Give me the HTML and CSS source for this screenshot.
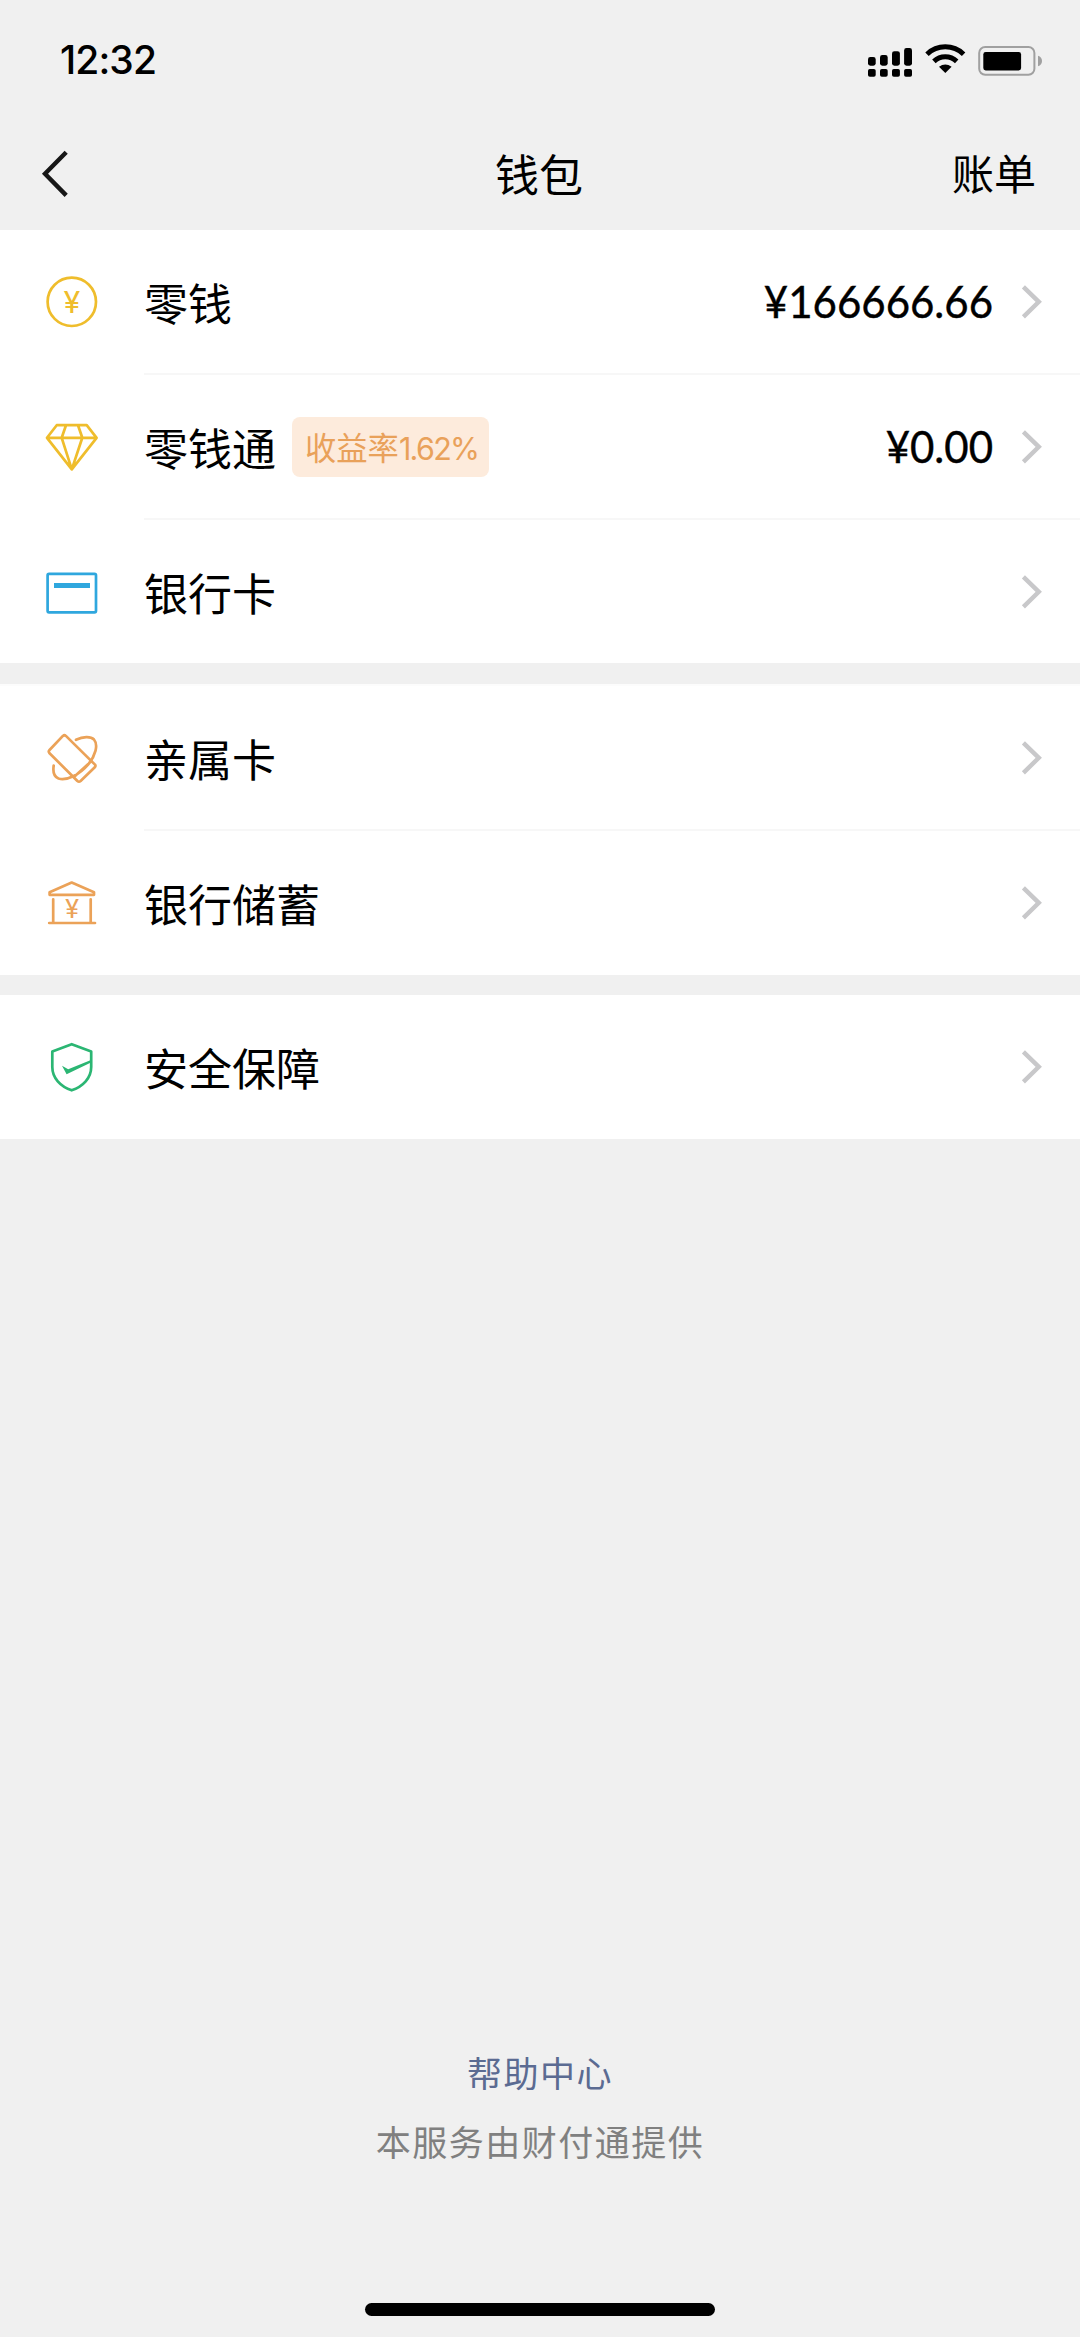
FILE: index.html
```html
<!DOCTYPE html>
<html lang="zh-CN">
<head>
<meta charset="utf-8">
<title>钱包</title>
<link rel="stylesheet" href="styles.css">
</head>
<body>
<div class="screen">
  <div class="status">
    <span class="time">12:32</span>
    <div class="status-icons">
      <svg width="48" height="40" viewBox="0 0 48 40">
        <rect x="2" y="17" width="7.7" height="8.7" rx="2.4"/><rect x="14" y="15" width="7.7" height="10.7" rx="2.4"/><rect x="26" y="11.2" width="7.9" height="14.5" rx="2.4"/><rect x="38.1" y="8" width="7.9" height="17.7" rx="2.4"/>
        <rect x="2" y="29" width="7.7" height="7.7" rx="1.8"/><rect x="14" y="29" width="7.7" height="7.7" rx="1.8"/><rect x="26" y="29" width="7.9" height="7.7" rx="1.8"/><rect x="38.1" y="29" width="7.9" height="7.7" rx="1.8"/>
      </svg>
      <svg width="42" height="40" viewBox="0 0 42 40">
        <path d="M3 14.2A26.5 26.5 0 0 1 39.6 14.2" fill="none" stroke="#000" stroke-width="5"/>
        <path d="M9.9 21.4A16.5 16.5 0 0 1 32.7 21.4" fill="none" stroke="#000" stroke-width="5"/>
        <path d="M15 26.8Q21.3 22.2 27.6 26.8L21.3 33Z"/>
      </svg>
      <svg width="68" height="40" viewBox="0 0 68 40">
        <rect x="3.2" y="7" width="55.2" height="27.8" rx="6" fill="none" stroke="#a0a0a0" stroke-width="2"/>
        <rect x="7.3" y="12" width="37.8" height="18.4" rx="2.4"/>
        <path d="M62 15.7Q66 17 66 21T62 26.3Z" fill="#a0a0a0"/>
      </svg>
    </div>
  </div>
  <header class="nav">
    <svg class="back" width="40" height="56" viewBox="0 0 40 56"><path d="M26.2 6.2L5 27.7L26.2 49.4" fill="none" stroke="#171717" stroke-width="4.4"/></svg>
    <h1 class="title">钱包</h1>
    <span class="bill">账单</span>
  </header>
  <main>
    <section class="group">
      <div class="row">
        <svg class="icon gold" viewBox="0 0 64 64"><circle cx="31.8" cy="31.8" r="24.2"/><text class="yen" x="31.8" y="43" font-size="31" fill="#efbd2c">¥</text></svg>
        <div class="cell"><span class="label">零钱</span><span class="amount">¥166666.66</span><svg class="chev" viewBox="0 0 24 40"><path d="M3.4 4.8L18.8 19.8L3.4 34.8"/></svg></div>
      </div>
      <div class="row">
        <svg class="icon gold" viewBox="0 0 64 64"><path d="M16.7 10.2H46.7L56.6 22.8L31.8 54.4L7 22.8ZM7 22.8H56.6M26 10.2L21.7 22.8L31.8 54.4L42.3 22.8L38 10.2"/></svg>
        <div class="cell"><span class="label">零钱通</span><span class="tag">收益率<span class="rate">1.62%</span></span><span class="amount">¥0.00</span><svg class="chev" viewBox="0 0 24 40"><path d="M3.4 4.8L18.8 19.8L3.4 34.8"/></svg></div>
      </div>
      <div class="row">
        <svg class="icon blue" viewBox="0 0 64 64"><rect x="7.6" y="13.9" width="48.4" height="38.4" rx="1.5"/><path d="M14 25.4H50" stroke-width="5"/></svg>
        <div class="cell"><span class="label">银行卡</span><svg class="chev" viewBox="0 0 24 40"><path d="M3.4 4.8L18.8 19.8L3.4 34.8"/></svg></div>
      </div>
    </section>
    <section class="group family">
      <div class="row">
        <svg class="icon orange" viewBox="0 0 64 64"><path d="M22.9 9.9Q24.4 8.6 25.9 9.9L55 38.6Q56 40 54.8 41.3L40.6 55Q39 56.4 37.4 55L9.3 27Q8.2 25.6 9.3 24.3Z"/><path d="M36 13.8C43 10.5 50.5 10 54 13.5C58.5 19 55.5 29.500 48.300 38.300C39.500 48.500 27 55 18.500 52.500C14 50.800 12.800 45.500 13.700 39.500M34.500 50.500L51.500 35"/></svg>
        <div class="cell"><span class="label">亲属卡</span><svg class="chev" viewBox="0 0 24 40"><path d="M3.4 4.8L18.8 19.8L3.4 34.8"/></svg></div>
      </div>
      <div class="row">
        <svg class="icon orange" viewBox="0 0 64 64"><path d="M31.7 11.5L54 21.2V23.8H9.600V21.200ZM13.200 28.300V52M50.700 28.300V52M9.200 52H55"/><text class="yen" x="32" y="46.700" font-size="26" fill="#eba258">¥</text></svg>
        <div class="cell"><span class="label">银行储蓄</span><svg class="chev" viewBox="0 0 24 40"><path d="M3.4 4.8L18.8 19.8L3.4 34.8"/></svg></div>
      </div>
    </section>
    <section class="group">
      <div class="row">
        <svg class="icon green" viewBox="0 0 64 64"><path d="M31.7 9.2L51.2 16.5V32C51.2 43 43 51.5 31.7 55.3C20.4 51.5 12.3 43 12.3 32V16.5Z"/><path d="M22 30.7L28.2 34.2L51 25V27.6L26.6 39.3Z" fill="#2bb673" stroke="none"/></svg>
        <div class="cell"><span class="label">安全保障</span><svg class="chev" viewBox="0 0 24 40"><path d="M3.4 4.8L18.8 19.8L3.4 34.8"/></svg></div>
      </div>
    </section>
  </main>
  <footer class="footer">
    <a class="help">帮助中心</a>
    <p class="note">本服务由财付通提供</p>
    <div class="home-bar"></div>
  </footer>
</div>
</body>
</html>
```
FILE: styles.css
```css
* { box-sizing: border-box; margin: 0; padding: 0; }
body {
  background: #f0f0f0;
  color: #000;
  font-family: "Noto Sans CJK SC", sans-serif;
}
svg { display: block; flex: none; }
.screen {
  width: 1080px;
  height: 2337px;
  display: flex;
  flex-direction: column;
  overflow: hidden;
}
.status {
  height: 120px;
  display: flex;
  justify-content: space-between;
  align-items: center;
  padding: 0 36px 0 60px;
}
.time {
  font: 500 39px/48px Inter, sans-serif;
  letter-spacing: -0.9px;
  margin-bottom: 1px;
}
.status-icons { display: flex; gap: 10px; }
.nav {
  height: 110px;
  display: grid;
  grid-template-columns: 1fr auto 1fr;
  align-items: center;
  padding: 0 44px 0 40px;
}
.back { margin-bottom: 3px; }
.title { font-size: 44px; line-height: 60px; font-weight: 400; margin-bottom: 4px; padding-left: 2px; }
.bill { font-size: 42px; line-height: 60px; justify-self: end; margin-bottom: 6px; }
.group { background: #fff; margin-bottom: 20px; }
.group:first-child { margin-bottom: 21px; }
.family { border-top: 2px solid #fcfcfc; }
.row {
  display: flex;
  align-items: stretch;
  gap: 40px;
  padding-left: 40px;
}
.icon {
  width: 64px;
  height: 64px;
  margin-top: 39.5px;
  fill: none;
  stroke-width: 2.7px;
  stroke-linejoin: round;
}
.icon path[stroke-width] { stroke-width: 5px; }
.gold { stroke: #efbd2c; }
.blue { stroke: #2fa7de; }
.orange { stroke: #eba258; stroke-linecap: round; }
.green { stroke: #2bb673; }
.cell {
  flex: 1;
  height: 145px;
  display: flex;
  align-items: center;
  padding-right: 36px;
  border-bottom: 2px solid #f7f7f7;
}
.row:last-child .cell { height: 144px; border-bottom: 0; }
.group:first-child .row:last-child .cell { height: 143px; }
.label { font-size: 44px; line-height: 60px; }
.tag {
  height: 60px;
  margin-left: 16px;
  padding-left: 13px;
  width: 197px;
  border-radius: 8px;
  background: #fdebdc;
  color: #e9a15a;
  font-size: 31.3px;
  line-height: 60px;
  white-space: nowrap;
}
.rate { font-family: Inter, sans-serif; font-size: 30.5px; letter-spacing: -1.7px; }
.amount {
  margin: 0 27px 2px auto;
  font-family: Lato, sans-serif;
  font-size: 42px;
  line-height: 60px;
  font-kerning: none;
  transform: scaleY(1.06);
  -webkit-text-stroke: 0.4px #000;
}
.chev { width: 24px; height: 40px; margin-left: auto; fill: none; stroke: #c8c8ca; stroke-width: 4.4px; }
.amount + .chev { margin-left: 0; }
.yen { font-family: Roboto, sans-serif; text-anchor: middle; stroke: none; }
.footer {
  margin-top: auto;
  display: flex;
  flex-direction: column;
  align-items: center;
  font-size: 35px;
  letter-spacing: 1.5px;
}
.help { color: #5b6b92; line-height: 50px; margin-bottom: 19px; }
.note { color: #808080; line-height: 50px; }
.home-bar {
  width: 350px;
  height: 13px;
  border-radius: 7px;
  background: #000;
  margin: 137px 0 21px;
}
```
